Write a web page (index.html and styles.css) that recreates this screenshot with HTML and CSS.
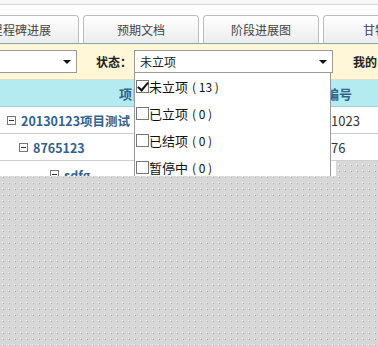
FILE: index.html
```html
<!DOCTYPE html>
<html lang="zh-CN">
<head>
    <meta charset="UTF-8">
    <title>项目进展</title>
    <link rel="stylesheet" href="styles.css">
</head>
<body>
    <div class="page">
        <div class="topbar"></div>
        <div class="tabs">
            <div class="tab">里程碑进展</div>
            <div class="tab">预期文档</div>
            <div class="tab">阶段进展图</div>
            <div class="tab">甘特图</div>
        </div>
        <div class="toolbar">
            <div class="select select-first"><span class="arrow"></span></div>
            <span class="label">状态：</span>
            <div class="select select-status">
                <span class="value">未立项</span>
                <span class="arrow"></span>
                <ul class="dropdown">
                    <li><span class="box checked"></span>未立项<span class="count">( 13 )</span></li>
                    <li><span class="box"></span>已立项<span class="count">( 0 )</span></li>
                    <li><span class="box"></span>已结项<span class="count">( 0 )</span></li>
                    <li><span class="box"></span>暂停中<span class="count">( 0 )</span></li>
                </ul>
            </div>
            <span class="label label-mine">我的</span>
        </div>
        <div class="grid">
            <div class="row head">
                <div class="cell name">项目名称</div>
                <div class="cell code head-code">项目编号</div>
            </div>
            <div class="row">
                <div class="cell name lvl1"><span class="minus"></span>20130123项目测试</div>
                <div class="cell code">1023</div>
            </div>
            <div class="row">
                <div class="cell name lvl2"><span class="minus"></span>8765123</div>
                <div class="cell code">76</div>
            </div>
            <div class="row row-last">
                <div class="cell name lvl3"><span class="minus"></span>sdfg</div>
                <div class="cell code"></div>
            </div>
        </div>
    </div>
</body>
</html>
```

FILE: styles.css
```css
/* Estilo geral */
body {
    margin: 0;
    font-family: "Noto Sans CJK SC", "Noto Sans", sans-serif;
    font-size: 12px;
    color: #222;
    background-color: #d7d7d7;
    background-image:
        conic-gradient(from 0deg at 1px 1px, transparent 75%, #f2f2f2 0),
        conic-gradient(from 0deg at 1px 1px, transparent 75%, #ababab 0);
    background-size: 6px 6px;
    background-position: 2px 2px, 3px 3px;
    overflow: hidden;
    height: 346px;
}

.page {
    height: 176px;
    overflow: hidden;
}

/* Barra superior */
.topbar {
    height: 4px;
    border-bottom: 1px solid #d4d4d4;
    background: #f8f8f8;
}

/* Abas */
.tabs {
    display: flex;
    gap: 4px;
    margin-left: -37px;
    padding-top: 10px;
    background: #fff;
    border-bottom: 1px solid #8fa6b8;
}

.tab {
    flex: none;
    width: 114px;
    height: 27px;
    line-height: 27px;
    text-align: center;
    font-size: 12px;
    color: #444;
    border: 1px solid #bcbcbc;
    border-bottom: none;
    border-radius: 4px 4px 0 0;
    background: linear-gradient(#ffffff, #ececec);
}

/* Barra de filtros */
.toolbar {
    display: flex;
    align-items: center;
    height: 35px;
    background: #fff7d7;
    border-bottom: 1px solid #e2dcc0;
}

.select {
    position: relative;
    height: 21px;
    border: 1px solid #9a9a9a;
    background: #fff;
    display: flex;
    align-items: center;
}

.select-first {
    width: 77px;
    margin-left: -2px;
}

.select-status {
    width: 197px;
    margin-left: 2px;
}

.select .value {
    padding-left: 5px;
    font-size: 12px;
}

.arrow {
    position: absolute;
    right: 5px;
    top: 9px;
    border-left: 4px solid transparent;
    border-right: 4px solid transparent;
    border-top: 4px solid #111;
}

.label {
    font-weight: bold;
    font-size: 12px;
    margin-left: 19px;
    color: #222;
}

.label-mine {
    margin-left: 20px;
}

/* Lista suspensa */
.dropdown {
    position: absolute;
    left: -1px;
    top: 21px;
    width: 195px;
    height: 120px;
    margin: 0;
    padding: 0;
    list-style: none;
    background: #fff;
    border: 1px solid #9a9a9a;
    z-index: 2;
}

.dropdown li {
    display: flex;
    align-items: center;
    height: 27px;
    font-size: 13px;
    color: #111;
}

.box {
    position: relative;
    width: 11px;
    height: 11px;
    margin-left: 1px;
    border: 1px solid #777;
    background: #fff;
}

.box.checked::after {
    content: "";
    position: absolute;
    left: 3px;
    top: -1px;
    width: 4px;
    height: 9px;
    border-right: 2px solid #111;
    border-bottom: 2px solid #111;
    transform: rotate(40deg);
}

.count {
    margin-left: 4px;
    font-size: 12px;
}

/* Tabela */
.grid {
    font-weight: bold;
    color: #34628f;
}

.row {
    display: flex;
    height: 26px;
    background: #fff;
    border-bottom: 1px solid #cfcfcf;
}

.row.head {
    background: #b3ebf0;
    border-bottom-color: #9fd2d8;
}

.row-last {
    width: 336px;
}

.cell {
    box-sizing: border-box;
    display: flex;
    align-items: center;
    font-size: 12.5px;
}

.name {
    width: 291px;
    flex: none;
    border-right: 1px solid #cfcfcf;
}

.head .name {
    justify-content: center;
    font-size: 13px;
}

.code {
    flex: 1;
    padding-left: 40px;
    font-size: 13px;
    font-weight: normal;
    color: #333;
}

.head .head-code {
    padding-left: 9px;
    font-weight: bold;
    color: #34628f;
}

.minus {
    width: 7px;
    height: 7px;
    border: 1px solid #777;
    margin-right: 5px;
    position: relative;
}

.minus::after {
    content: "";
    position: absolute;
    left: 1px;
    top: 3px;
    width: 5px;
    height: 1px;
    background: #333;
}

.lvl1 { padding-left: 7px; }
.lvl2 { padding-left: 19px; }
.lvl3 { padding-left: 50px; }
```
